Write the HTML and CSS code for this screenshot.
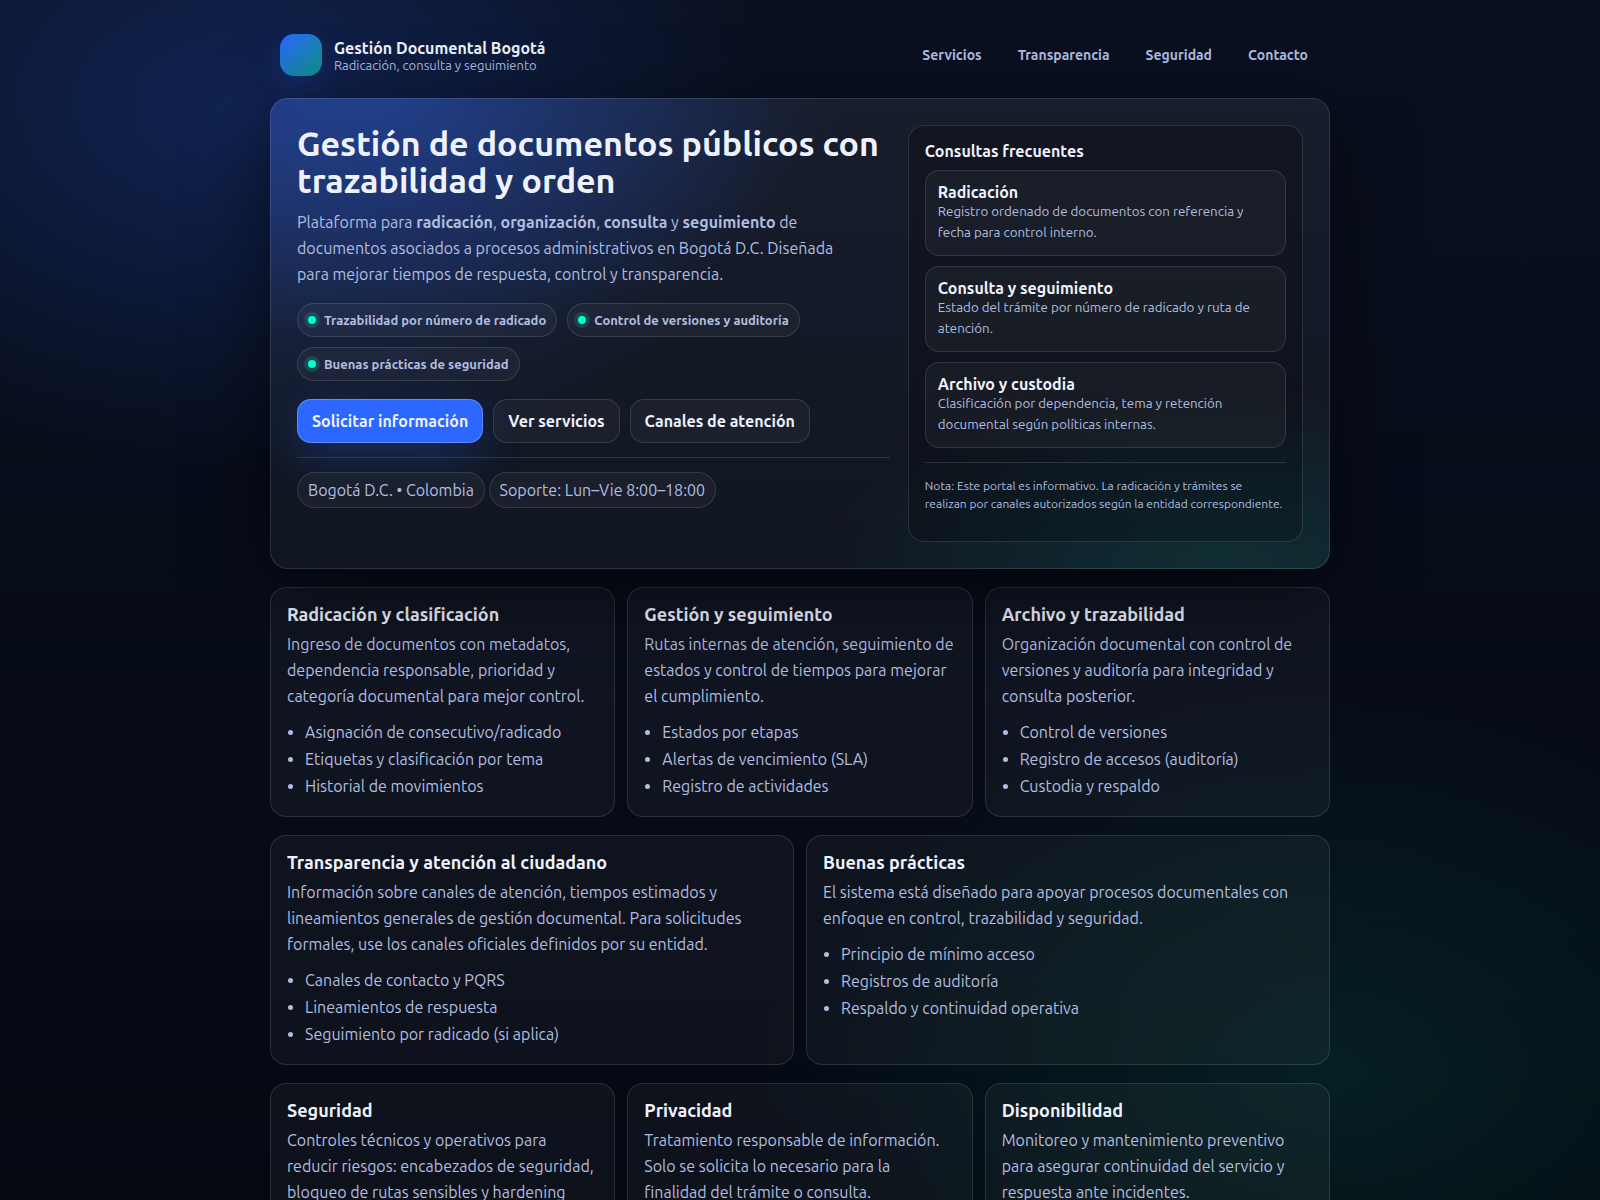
FILE: index.html
```html
<!DOCTYPE html>
<html lang="es">
<head>
    <meta charset="UTF-8">
    <meta name="viewport" content="width=device-width, initial-scale=1.0">
    <title>Gestión Documental Bogotá</title>
    <link rel="stylesheet" href="styles.css">
</head>
<body>
    <div class="wrap">
        <!-- Header -->
        <header class="topbar">
            <div class="brand">
                <div class="logo" aria-hidden="true"></div>
                <div class="brand-text">
                    <strong>Gestión Documental Bogotá</strong>
                    <span>Radicación, consulta y seguimiento</span>
                </div>
            </div>
            <nav class="nav">
                <a href="#servicios">Servicios</a>
                <a href="#transparencia">Transparencia</a>
                <a href="#seguridad">Seguridad</a>
                <a href="#contacto">Contacto</a>
            </nav>
        </header>

        <main>
            <!-- Hero -->
            <section class="hero">
                <div class="hero-main">
                    <h1>Gestión de documentos públicos con trazabilidad y orden</h1>
                    <p class="lead">
                        Plataforma para <strong>radicación</strong>, <strong>organización</strong>, <strong>consulta</strong> y <strong>seguimiento</strong> de documentos asociados a procesos administrativos en Bogotá D.C. Diseñada para mejorar tiempos de respuesta, control y transparencia.
                    </p>
                    <div class="badges">
                        <span class="badge"><span class="dot"></span>Trazabilidad por número de radicado</span>
                        <span class="badge"><span class="dot"></span>Control de versiones y auditoría</span>
                        <span class="badge"><span class="dot"></span>Buenas prácticas de seguridad</span>
                    </div>
                    <div class="actions">
                        <a class="btn primary" href="#contacto">Solicitar información</a>
                        <a class="btn" href="#servicios">Ver servicios</a>
                        <a class="btn" href="#contacto">Canales de atención</a>
                    </div>
                    <hr>
                    <div class="tags">
                        <span class="tag">Bogotá D.C. • Colombia</span>
                        <span class="tag">Soporte: Lun–Vie 8:00–18:00</span>
                    </div>
                </div>

                <aside class="panel">
                    <h2>Consultas frecuentes</h2>
                    <div class="items">
                        <div class="item">
                            <strong>Radicación</strong>
                            <small>Registro ordenado de documentos con referencia y fecha para control interno.</small>
                        </div>
                        <div class="item">
                            <strong>Consulta y seguimiento</strong>
                            <small>Estado del trámite por número de radicado y ruta de atención.</small>
                        </div>
                        <div class="item">
                            <strong>Archivo y custodia</strong>
                            <small>Clasificación por dependencia, tema y retención documental según políticas internas.</small>
                        </div>
                    </div>
                    <hr>
                    <p class="note">Nota: Este portal es informativo. La radicación y trámites se realizan por canales autorizados según la entidad correspondiente.</p>
                </aside>
            </section>

            <!-- Servicios -->
            <section class="grid three" id="servicios">
                <article class="card">
                    <h3>Radicación y clasificación</h3>
                    <p>Ingreso de documentos con metadatos, dependencia responsable, prioridad y categoría documental para mejor control.</p>
                    <ul>
                        <li>Asignación de consecutivo/radicado</li>
                        <li>Etiquetas y clasificación por tema</li>
                        <li>Historial de movimientos</li>
                    </ul>
                </article>
                <article class="card">
                    <h3>Gestión y seguimiento</h3>
                    <p>Rutas internas de atención, seguimiento de estados y control de tiempos para mejorar el cumplimiento.</p>
                    <ul>
                        <li>Estados por etapas</li>
                        <li>Alertas de vencimiento (SLA)</li>
                        <li>Registro de actividades</li>
                    </ul>
                </article>
                <article class="card">
                    <h3>Archivo y trazabilidad</h3>
                    <p>Organización documental con control de versiones y auditoría para integridad y consulta posterior.</p>
                    <ul>
                        <li>Control de versiones</li>
                        <li>Registro de accesos (auditoría)</li>
                        <li>Custodia y respaldo</li>
                    </ul>
                </article>
            </section>

            <!-- Transparencia -->
            <section class="grid two" id="transparencia">
                <article class="card">
                    <h3>Transparencia y atención al ciudadano</h3>
                    <p>Información sobre canales de atención, tiempos estimados y lineamientos generales de gestión documental. Para solicitudes formales, use los canales oficiales definidos por su entidad.</p>
                    <ul>
                        <li>Canales de contacto y PQRS</li>
                        <li>Lineamientos de respuesta</li>
                        <li>Seguimiento por radicado (si aplica)</li>
                    </ul>
                </article>
                <article class="card">
                    <h3>Buenas prácticas</h3>
                    <p>El sistema está diseñado para apoyar procesos documentales con enfoque en control, trazabilidad y seguridad.</p>
                    <ul>
                        <li>Principio de mínimo acceso</li>
                        <li>Registros de auditoría</li>
                        <li>Respaldo y continuidad operativa</li>
                    </ul>
                </article>
            </section>

            <!-- Seguridad -->
            <section class="grid three" id="seguridad">
                <article class="card">
                    <h3>Seguridad</h3>
                    <p>Controles técnicos y operativos para reducir riesgos: encabezados de seguridad, bloqueo de rutas sensibles y hardening</p>
                </article>
                <article class="card">
                    <h3>Privacidad</h3>
                    <p>Tratamiento responsable de información. Solo se solicita lo necesario para la finalidad del trámite o consulta.</p>
                </article>
                <article class="card">
                    <h3>Disponibilidad</h3>
                    <p>Monitoreo y mantenimiento preventivo para asegurar continuidad del servicio y respuesta ante incidentes.</p>
                </article>
            </section>
        </main>
    </div>
</body>
</html>
```
FILE: styles.css
```css
:root {
    --text: #eef2ff;
    --muted: #b1bee0;
    --line: rgba(255, 255, 255, 0.12);
    --brand: #2b66ff;
    --accent: #00ffcc;
}

* {
    box-sizing: border-box;
}

body {
    margin: 0;
    min-height: 100vh;
    font-family: Ubuntu, "Noto Sans", "Open Sans", sans-serif;
    font-size: 16px;
    color: var(--text);
    background:
        radial-gradient(900px 600px at 15% 9%, rgba(43, 102, 255, 0.23), transparent 60%),
        radial-gradient(960px 640px at 83% 86%, rgba(0, 255, 190, 0.09), transparent 60%),
        linear-gradient(180deg, #0a1020, #040811);
}

a {
    color: inherit;
    text-decoration: none;
}

h1, h2, h3, p, ul {
    margin: 0;
}

hr {
    height: 1px;
    margin: 14px 0;
    border: 0;
    background: var(--line);
}

.wrap {
    max-width: 1108px;
    margin: 0 auto;
    padding: 24px;
}

/* Header */
.topbar {
    display: flex;
    align-items: center;
    justify-content: space-between;
    padding: 10px;
    margin-bottom: 12px;
}

.brand {
    display: flex;
    align-items: center;
    gap: 12px;
}

.logo {
    width: 42px;
    height: 42px;
    border-radius: 14px;
    background: linear-gradient(135deg, #2b66ff, #0f9488);
    box-shadow: 0 10px 30px rgba(43, 102, 255, 0.2);
}

.brand-text strong,
.brand-text span {
    display: block;
    line-height: 20px;
}

.brand-text span {
    font-size: 13px;
    line-height: 14px;
    color: var(--muted);
}

.nav {
    display: flex;
    gap: 12px;
}

.nav a {
    padding: 10px 12px;
    font-size: 14px;
    font-weight: 600;
    color: var(--muted);
}

/* Hero */
.hero {
    position: relative;
    display: grid;
    grid-template-columns: 3fr 2fr;
    gap: 18px;
    padding: 26px;
    border: 1px solid var(--line);
    border-radius: 18px;
    background:
        radial-gradient(720px 380px at 10% 0%, rgba(43, 102, 255, 0.34), transparent 65%),
        radial-gradient(680px 300px at 90% 100%, rgba(0, 255, 200, 0.11), transparent 60%),
        linear-gradient(180deg, rgba(255, 255, 255, 0.06), rgba(255, 255, 255, 0.04));
    background-origin: border-box;
    box-shadow: 0 20px 80px rgba(0, 0, 0, 0.55);
}

.hero h1 {
    margin-bottom: 10px;
    font-size: 34px;
    font-weight: 700;
    line-height: 37px;
}

.lead {
    max-width: 560px;
    line-height: 26px;
    color: var(--muted);
}

.badges,
.actions {
    display: flex;
    flex-wrap: wrap;
    gap: 10px;
}

.badges {
    margin: 16px 0 18px;
}

.badge {
    display: inline-flex;
    align-items: center;
    gap: 8px;
    padding: 8px 10px;
    border: 1px solid var(--line);
    border-radius: 18px;
    background: rgba(255, 255, 255, 0.04);
    font-size: 13px;
    font-weight: 600;
    line-height: 16px;
    color: var(--muted);
}

.dot {
    width: 8px;
    height: 8px;
    border-radius: 50%;
    background: var(--accent);
    box-shadow: 0 0 0 4px rgba(0, 255, 204, 0.15);
}

.btn {
    padding: 12px 14px;
    border: 1px solid var(--line);
    border-radius: 14px;
    background: rgba(255, 255, 255, 0.04);
    font-weight: 600;
    line-height: 18px;
}

.btn.primary {
    border-color: rgba(255, 255, 255, 0.25);
    background: var(--brand);
    box-shadow: 0 14px 40px rgba(43, 102, 255, 0.25);
}

.tag {
    display: inline-block;
    padding: 8px 10px;
    border: 1px solid var(--line);
    border-radius: 18px;
    background: rgba(255, 255, 255, 0.04);
    line-height: 18px;
    color: var(--muted);
}

/* Side panel */
.panel {
    padding: 16px;
    border: 1px solid var(--line);
    border-radius: 16px;
    background: rgba(0, 0, 0, 0.22);
}

.panel h2 {
    margin-bottom: 10px;
    font-size: 16px;
    line-height: 18px;
}

.items {
    display: flex;
    flex-direction: column;
    gap: 10px;
}

.item {
    padding: 12px;
    border: 1px solid var(--line);
    border-radius: 14px;
    background: rgba(255, 255, 255, 0.04);
}

.item strong,
.item small {
    display: block;
    line-height: 18px;
}

.item small {
    line-height: 21px;
    color: var(--muted);
}

.note {
    margin-bottom: 12px;
    font-size: 12px;
    line-height: 18px;
    color: var(--muted);
}

/* Cards */
.grid {
    display: grid;
    gap: 12px;
    margin-top: 18px;
}

.three {
    grid-template-columns: repeat(3, 1fr);
}

.two {
    grid-template-columns: repeat(2, 1fr);
}

.card {
    padding: 16px;
    border: 1px solid var(--line);
    border-radius: 16px;
    background: rgba(255, 255, 255, 0.04);
}

.card h3 {
    margin-bottom: 6px;
    font-size: 18px;
    line-height: 21px;
}

.card p {
    line-height: 26px;
    color: var(--muted);
}

.card ul {
    margin-top: 10px;
    padding-left: 18px;
    line-height: 27px;
    color: var(--muted);
}
```
